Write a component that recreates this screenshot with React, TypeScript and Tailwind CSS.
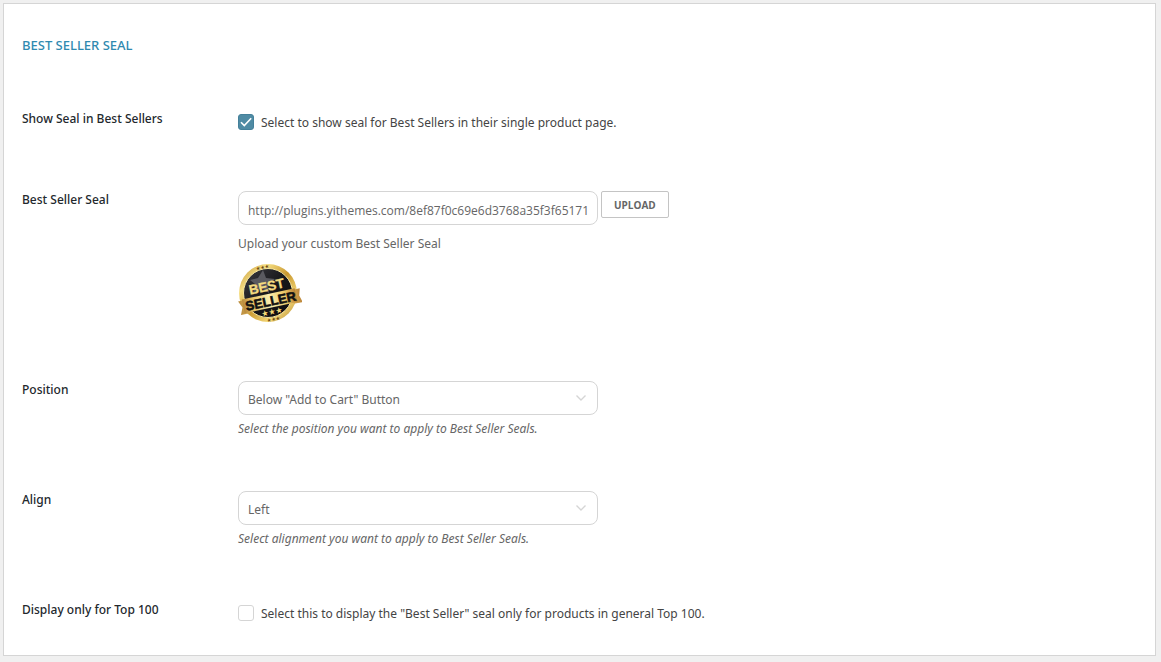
import { useState, type ReactNode } from 'react';

const POSITIONS = ['Below "Add to Cart" Button', 'Above "Add to Cart" Button', 'Below product title'];
const ALIGNMENTS = ['Left', 'Center', 'Right'];

export default function App() {
  const [showSeal, setShowSeal] = useState(true);
  const [onlyTop, setOnlyTop] = useState(false);
  const [sealUrl, setSealUrl] = useState('http://plugins.yithemes.com/8ef87f0c69e6d3768a35f3f651717/best-seller.png');
  const [position, setPosition] = useState(POSITIONS[0]);
  const [align, setAlign] = useState(ALIGNMENTS[0]);

  return (
    <div className="min-h-screen bg-[#f0f0f0] pt-[3px] pr-[5px] pb-1 pl-[3px] font-['Noto_Sans',sans-serif] text-xs text-[#444]">
      <form className="border border-[#d5d5d5] bg-white px-[18px] pt-8 pb-[25px]" onSubmit={(e) => e.preventDefault()}>
        <h2 className="text-[13px] leading-[18px] font-medium text-[#2f8ab0] uppercase">Best Seller Seal</h2>

        <div className="mt-14 flex flex-col gap-[52px]">
          <SettingRow id="show-seal" label="Show Seal in Best Sellers">
            <CheckField id="show-seal" checked={showSeal} onChange={setShowSeal}>
              Select to show seal for Best Sellers in their single product page.
            </CheckField>
          </SettingRow>

          <SettingRow id="seal-url" label="Best Seller Seal">
            <div className="flex items-start gap-[3px]">
              <input
                id="seal-url"
                type="text"
                value={sealUrl}
                onChange={(e) => setSealUrl(e.target.value)}
                className="h-[34px] w-[360px] rounded-lg border border-[#d5d5d5] bg-white px-[9px] pt-1 font-['Open_Sans',sans-serif] text-xs text-[#666] outline-none"
              />
              <button
                type="button"
                className="h-[27px] rounded-xs border border-[#c4c4c4] bg-white px-3 pt-0.5 font-['Open_Sans',sans-serif] text-[10px] font-bold text-[#666]"
              >
                UPLOAD
              </button>
            </div>
            <p className="mt-2 leading-[22px] text-[#666]">Upload your custom Best Seller Seal</p>
            <div className="mt-1.5 pb-1">
              <SealImage />
            </div>
          </SettingRow>

          <SettingRow id="position" label="Position">
            <SelectField id="position" value={position} options={POSITIONS} onChange={setPosition} />
            <p className="mt-1 leading-5 text-[#666] italic">Select the position you want to apply to Best Seller Seals.</p>
          </SettingRow>

          <SettingRow id="align" label="Align">
            <SelectField id="align" value={align} options={ALIGNMENTS} onChange={setAlign} />
            <p className="mt-1 leading-5 text-[#666] italic">Select alignment you want to apply to Best Seller Seals.</p>
          </SettingRow>

          <SettingRow id="only-top" label="Display only for Top 100">
            <CheckField id="only-top" checked={onlyTop} onChange={setOnlyTop}>
              Select this to display the "Best Seller" seal only for products in general Top 100.
            </CheckField>
          </SettingRow>
        </div>
      </form>
    </div>
  );
}

function SettingRow({ id, label, children }: { id: string, label: string, children: ReactNode }) {
  return (
    <div className="grid min-h-[29px] grid-cols-[216px_1fr] items-start">
      <label htmlFor={id} className="leading-[18px] font-medium text-[#23282d]">{label}</label>
      <div>{children}</div>
    </div>
  );
}

function CheckField({ id, checked, onChange, children }: { id: string, checked: boolean, onChange: (v: boolean) => void, children: ReactNode }) {
  return (
    <label className="flex h-6 items-center gap-[7px]">
      <span className="grid size-4">
        <input
          id={id}
          type="checkbox"
          checked={checked}
          onChange={(e) => onChange(e.target.checked)}
          className="peer col-start-1 row-start-1 size-4 appearance-none rounded-[3px] border border-[#d5d5d5] bg-white checked:border-[#44809a] checked:bg-[#4f8ba4]"
        />
        <svg viewBox="0 0 16 16" className="pointer-events-none invisible col-start-1 row-start-1 size-4 peer-checked:visible" fill="none" stroke="#fff" strokeWidth="1.6">
          <path d="M3 8.2 6.3 11.6 13.2 4.2" />
        </svg>
      </span>
      <span className="pt-0.5">{children}</span>
    </label>
  );
}

function SelectField({ id, value, options, onChange }: { id: string, value: string, options: string[], onChange: (v: string) => void }) {
  return (
    <div className="grid w-[360px] items-center">
      <select
        id={id}
        value={value}
        onChange={(e) => onChange(e.target.value)}
        className="col-start-1 row-start-1 h-[34px] appearance-none rounded-lg border border-[#d5d5d5] bg-white px-[9px] pt-1 text-[#666] outline-none"
      >
        {options.map((option) => (
          <option key={option}>{option}</option>
        ))}
      </select>
      <svg viewBox="0 0 10 6" className="pointer-events-none col-start-1 row-start-1 mr-3 h-1.5 w-2.5 justify-self-end" fill="none" stroke="#d5d5d5" strokeWidth="1.4">
        <path d="M.5.5 5 5 9.5.5" />
      </svg>
    </div>
  );
}

function SealImage() {
  return (
    <svg viewBox="0 0 64 64" className="size-16" role="img" aria-label="Best Seller Seal">
      <defs>
        <linearGradient id="gold" x1="0" y1="0" x2="1" y2="1">
          <stop offset="0" stopColor="#b8862b" />
          <stop offset=".25" stopColor="#f6df83" />
          <stop offset=".5" stopColor="#c9972f" />
          <stop offset=".75" stopColor="#f3d877" />
          <stop offset="1" stopColor="#a87420" />
        </linearGradient>
        <linearGradient id="ribbon" x1="0" y1="0" x2="1" y2="0">
          <stop offset="0" stopColor="#b98a3c" />
          <stop offset=".2" stopColor="#e8c468" />
          <stop offset=".5" stopColor="#fbeeb0" />
          <stop offset=".8" stopColor="#ecc866" />
          <stop offset="1" stopColor="#b98236" />
        </linearGradient>
        <linearGradient id="disc" x1="0" y1="0" x2="1" y2="1">
          <stop offset="0" stopColor="#3c3c42" />
          <stop offset=".5" stopColor="#17171a" />
          <stop offset="1" stopColor="#0c0c0e" />
        </linearGradient>
      </defs>
      <circle cx="30" cy="32" r="29" fill="url(#gold)" />
      <circle cx="30" cy="32" r="24.5" fill="url(#disc)" stroke="#f7e7a2" strokeWidth="1" />
      <path d="M25 9l3 8 9 1-7 5 1 9-8-5-8 5 2-9-5-4 8-2z" fill="#5a5a60" />
      <g transform="rotate(-12 30 32)">
        <path d="M-1 34h9v14h-9l3-7zM62 34h-9v14h9l-2-7z" fill="url(#ribbon)" />
        <path d="M3 33h54v14H3z" fill="url(#ribbon)" />
        <text x="30" y="30" textAnchor="middle" fill="#f5dc80" stroke="#f5dc80" strokeWidth=".3" fontFamily="Liberation Sans, sans-serif" fontSize="13.5" fontWeight="700">BEST</text>
        <text x="31" y="45" textAnchor="middle" fill="#111" stroke="#111" strokeWidth=".6" fontFamily="Liberation Sans, sans-serif" fontSize="13" fontWeight="700">SELLER</text>
        <text x="30" y="54" textAnchor="middle" fill="#f3d877" fontFamily="DejaVu Sans, sans-serif" fontSize="8">★★★</text>
        <text x="30" y="7.5" textAnchor="middle" fill="#6b4712" fontFamily="DejaVu Sans, sans-serif" fontSize="5">★★★</text>
        <text x="30" y="60.5" textAnchor="middle" fill="#6b4712" fontFamily="DejaVu Sans, sans-serif" fontSize="5">★★★</text>
      </g>
    </svg>
  );
}
